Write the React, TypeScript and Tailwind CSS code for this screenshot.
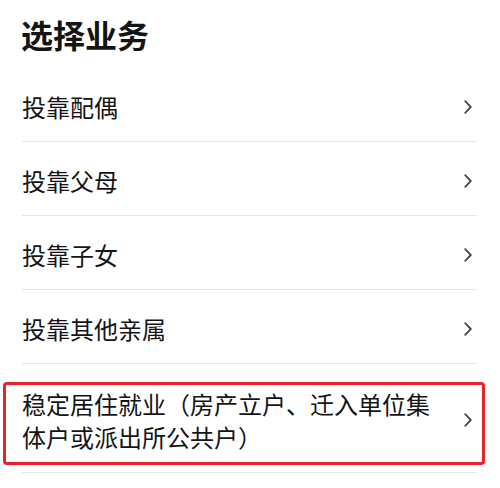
const items = ["投靠配偶", "投靠父母", "投靠子女", "投靠其他亲属"];

const Chevron = () => (
  <svg width="8" height="14" viewBox="0 0 8 14" className="shrink-0">
    <polyline
      points="1.2,1.2 6.8,7 1.2,12.8"
      fill="none"
      stroke="#4a4a4a"
      strokeWidth="1.8"
      strokeLinecap="round"
      strokeLinejoin="round"
    />
  </svg>
);

export default function App() {
  return (
    <div
      className="w-[500px] h-[488px] bg-white overflow-hidden text-[#141414]"
      style={{ fontFamily: '"Noto Sans CJK SC", "Noto Sans", sans-serif' }}
    >
      {/* 标题 */}
      <h1 className="pl-[21px] pt-[14px] h-[68px] text-[32px] leading-[40px] font-bold">
        选择业务
      </h1>

      {/* 列表 */}
      <div className="ml-[22px] mr-[23px]">
        {items.map((name) => (
          <div
            key={name}
            className="h-[74px] pt-[23px] flex items-start justify-between border-b border-[#e6e6e6] pr-[5px]"
          >
            <span className="text-[24px] leading-[32px]">{name}</span>
            <span className="h-[32px] flex items-center">
              <Chevron />
            </span>
          </div>
        ))}

        <div className="relative h-[109px] flex items-center border-b border-[#e6e6e6] pr-[5px]">
          <div className="w-[420px] text-[24px] leading-[33px] mt-[4px]">
            稳定居住就业（房产立户、迁入单位集体户或派出所公共户）
          </div>
          <div className="flex-1 flex justify-end mt-[4px]">
            <Chevron />
          </div>
          {/* 红框标注 */}
          <div className="absolute left-[-19px] right-[-8px] top-[18px] h-[83px] border-[3px] border-[#e8222a] rounded-[4px]" />
        </div>
      </div>
    </div>
  );
}
